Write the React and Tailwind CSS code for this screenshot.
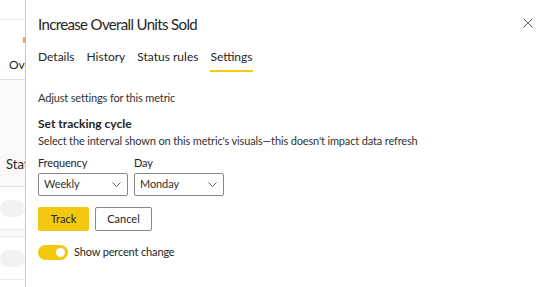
import React from "react";

const font = { fontFamily: 'Lato, "Open Sans", sans-serif' };

function Chevron() {
  return (
    <svg width="9" height="5" viewBox="0 0 9 5" fill="none">
      <path d="M0.5 0.5 L4.5 4.5 L8.5 0.5" stroke="#605e5c" strokeWidth="1" />
    </svg>
  );
}

function Select({ value }) {
  return (
    <div className="w-[90px] h-[23px] border border-[#8a8886] rounded-[2px] flex items-center justify-between pl-[5px] pr-[6px] text-[11px] tracking-[-0.1px] text-[#323130]">
      <span>{value}</span>
      <Chevron />
    </div>
  );
}

export default function App() {
  return (
    <div className="w-[551px] h-[287px] flex bg-white overflow-hidden text-[#252423]" style={font}>
      {/* background page strip */}
      <div className="w-[25px] shrink-0 flex flex-col overflow-hidden">
        <div className="h-[20px] border-b border-[#edebe9]" />
        <div className="h-[60px] border-b border-[#e1dfdd] relative flex flex-col">
          <div className="absolute left-[23px] top-[17px] w-[2px] h-[6px] bg-[#e8a33d]" />
          <div className="mt-auto mb-[6px] ml-[9px] w-[16px] overflow-hidden text-[12px] leading-[16px] whitespace-nowrap">Overview</div>
        </div>
        <div className="h-[107px] bg-[#faf9f8] border-b border-[#e1dfdd] flex flex-col">
          <div className="mt-auto mb-[13px] ml-[6px] w-[19px] overflow-hidden text-[13px] leading-[18px] whitespace-nowrap">Status</div>
        </div>
        <div className="h-[43px] flex items-center border-b border-[#edebe9]">
          <div className="w-[40px] h-[17px] rounded-full bg-[#f3f2f1]" />
        </div>
        <div className="h-[7px] bg-[#faf9f8] border-b border-[#edebe9]" />
        <div className="h-[43px] flex items-center border-b border-[#edebe9]">
          <div className="w-[40px] h-[17px] rounded-full bg-[#f3f2f1]" />
        </div>
      </div>

      {/* panel */}
      <div className="flex-1 border-l border-[#c8c6c4] pl-[12px] pt-[13px] relative flex flex-col">
        <div className="flex items-start">
          <div className="text-[15px] leading-[22px] tracking-[-0.65px] font-normal text-[#252423] whitespace-nowrap">Increase Overall Units Sold</div>
          <svg className="absolute right-[18px] top-[18px]" width="10" height="10" viewBox="0 0 10 10">
            <path d="M0.5 0.5 L9.5 9.5 M9.5 0.5 L0.5 9.5" stroke="#605e5c" strokeWidth="1" />
          </svg>
        </div>

        <div className="flex gap-[12px] mt-[13px] text-[12px] leading-[18px]">
          <div className="pb-[6px]">Details</div>
          <div className="pb-[6px]">History</div>
          <div className="pb-[6px]">Status rules</div>
          <div className="pb-[4px] border-b-2 border-[#f2c811]">Settings</div>
        </div>

        <div className="mt-[18px] text-[11px] tracking-[-0.15px] leading-[16px] text-[#323130]">Adjust settings for this metric</div>

        <div className="mt-[9px] text-[12px] leading-[18px] font-bold">Set tracking cycle</div>
        <div className="text-[11px] tracking-[-0.15px] leading-[16px] text-[#323130] whitespace-nowrap">
          Select the interval shown on this metric's visuals—this doesn't impact data refresh
        </div>

        <div className="flex gap-[6px] mt-[6px]">
          <div className="flex flex-col">
            <div className="text-[11px] tracking-[-0.15px] leading-[16px] mb-[2px]">Frequency</div>
            <Select value="Weekly" />
          </div>
          <div className="flex flex-col">
            <div className="text-[11px] tracking-[-0.15px] leading-[16px] mb-[2px]">Day</div>
            <Select value="Monday" />
          </div>
        </div>

        <div className="flex gap-[6px] mt-[11px]">
          <div className="w-[51px] h-[24px] bg-[#f2c811] rounded-[2px] flex items-center justify-center text-[11px] text-[#252423]">Track</div>
          <div className="w-[57px] h-[24px] border border-[#8a8886] rounded-[2px] flex items-center justify-center text-[11px] text-[#252423]">Cancel</div>
        </div>

        <div className="flex items-center gap-[6px] mt-[13px]">
          <div className="w-[30px] h-[15px] rounded-full bg-[#f2c811] flex items-center justify-end pr-[3px]">
            <div className="w-[9px] h-[9px] rounded-full bg-white" />
          </div>
          <div className="text-[11px] tracking-[-0.15px] leading-[16px]">Show percent change</div>
        </div>
      </div>
    </div>
  );
}
